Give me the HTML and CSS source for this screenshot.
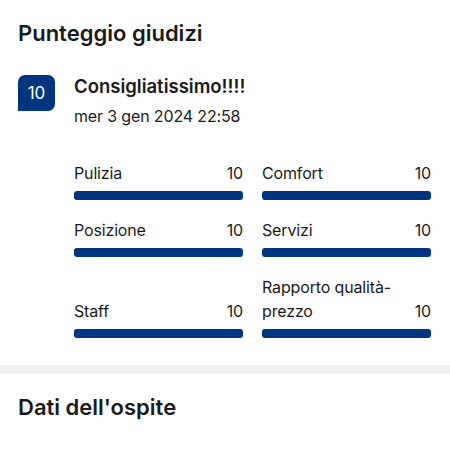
FILE: index.html
```html
<!DOCTYPE html>
<html lang="it">
<head>
<meta charset="utf-8">
<link rel="stylesheet" href="styles.css">
</head>
<body>
<section class="section">
  <h2 class="heading">Punteggio giudizi</h2>
  <div class="review">
    <div class="badge">10</div>
    <div class="review-body">
      <div class="title">Consigliatissimo!!!!</div>
      <div class="date">mer 3 gen 2024 22:58</div>
      <div class="scores">
        <div class="score">
          <div class="score-head"><span class="label">Pulizia</span><span class="num">10</span></div>
          <div class="bar"><div class="fill" style="width:100%"></div></div>
        </div>
        <div class="score">
          <div class="score-head"><span class="label">Comfort</span><span class="num">10</span></div>
          <div class="bar"><div class="fill" style="width:100%"></div></div>
        </div>
        <div class="score">
          <div class="score-head"><span class="label">Posizione</span><span class="num">10</span></div>
          <div class="bar"><div class="fill" style="width:100%"></div></div>
        </div>
        <div class="score">
          <div class="score-head"><span class="label">Servizi</span><span class="num">10</span></div>
          <div class="bar"><div class="fill" style="width:100%"></div></div>
        </div>
        <div class="score">
          <div class="score-head"><span class="label">Staff</span><span class="num">10</span></div>
          <div class="bar"><div class="fill" style="width:100%"></div></div>
        </div>
        <div class="score">
          <div class="score-head"><span class="label narrow">Rapporto qualità-prezzo</span><span class="num">10</span></div>
          <div class="bar"><div class="fill" style="width:100%"></div></div>
        </div>
      </div>
    </div>
  </div>
</section>
<div class="divider"></div>
<section class="section">
  <h2 class="heading">Dati dell'ospite</h2>
</section>
</body>
</html>
```

FILE: styles.css
```css
html, body {
  margin: 0;
  padding: 0;
  background: #fff;
}
body {
  font-family: Inter, "Noto Sans", sans-serif;
  color: #1a1a1a;
  width: 450px;
}
.section {
  padding: 0 18px;
}
.heading {
  margin: 0;
  padding-top: 19px;
  font-size: 22px;
  line-height: 28px;
  font-weight: 600;
  letter-spacing: 0;
}
.review {
  display: flex;
  gap: 19px;
  margin-top: 28px;
  padding-bottom: 27px;
}
.badge {
  flex: none;
  width: 37px;
  height: 36px;
  background: #003580;
  color: #fff;
  border-radius: 7px 7px 7px 0;
  font-size: 17px;
  line-height: 36px;
  text-align: center;
}
.review-body {
  flex: 1;
}
.title {
  font-size: 18.5px;
  line-height: 24px;
  font-weight: 600;
  margin-top: -1px;
}
.date {
  font-size: 16px;
  line-height: 20px;
  letter-spacing: -0.15px;
  margin-top: 8px;
}
.scores {
  display: grid;
  grid-template-columns: 169px 169px;
  column-gap: 19px;
  row-gap: 18px;
  align-items: end;
  margin-top: 35px;
}
.score-head {
  display: flex;
  justify-content: space-between;
  align-items: flex-end;
  font-size: 16px;
  letter-spacing: -0.15px;
  line-height: 24px;
}
.label.narrow {
  max-width: 140px;
}
.bar {
  margin-top: 6px;
  height: 9px;
  border-radius: 3px;
  background: #e6e6e6;
  overflow: hidden;
}
.fill {
  height: 100%;
  background: #003580;
}
.divider {
  height: 9px;
  background: #f0f0f0;
}
```
